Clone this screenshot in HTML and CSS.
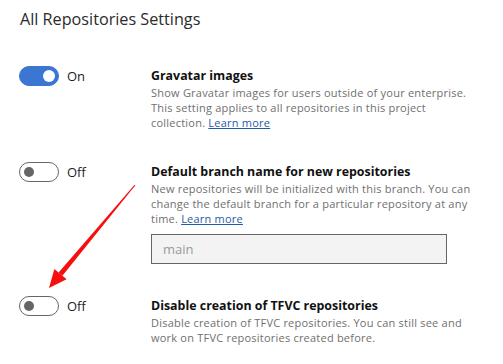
FILE: index.html
```html
<!DOCTYPE html>
<html lang="en">

<head>
  <meta charset="UTF-8">
  <meta name="viewport" content="width=device-width, initial-scale=1.0">
  <title>All Repositories Settings</title>
  <link rel="stylesheet" href="styles.css">
</head>

<body>
  <div class="page">
    <h1 class="page-title">All Repositories Settings</h1>

    <div class="settings">
      <div class="setting">
        <div class="toggle-wrap">
          <span class="toggle toggle--on"><span class="knob"></span></span>
          <span class="toggle-label">On</span>
        </div>
        <div class="setting-body">
          <h3 class="setting-title">Gravatar images</h3>
          <p class="setting-desc">Show Gravatar images for users outside of your enterprise. This setting applies to all repositories in this project collection. <a href="#">Learn more</a></p>
        </div>
      </div>

      <div class="setting">
        <div class="toggle-wrap">
          <span class="toggle"><span class="knob"></span></span>
          <span class="toggle-label">Off</span>
        </div>
        <div class="setting-body">
          <h3 class="setting-title">Default branch name for new repositories</h3>
          <p class="setting-desc">New repositories will be initialized with this branch. You can change the default branch for a particular repository at any time. <a href="#">Learn more</a></p>
          <input class="branch-input" type="text" placeholder="main" disabled>
        </div>
      </div>

      <div class="setting">
        <div class="toggle-wrap">
          <span class="toggle"><span class="knob"></span></span>
          <span class="toggle-label">Off</span>
        </div>
        <div class="setting-body">
          <h3 class="setting-title">Disable creation of TFVC repositories</h3>
          <p class="setting-desc">Disable creation of TFVC repositories. You can still see and work on TFVC repositories created before.</p>
        </div>
      </div>
    </div>
  </div>

  <svg class="annotation" width="503" height="364" viewBox="0 0 503 364">
    <polygon fill="#f50f0f" points="135.4,185.3 134.6,184.7 58.6,272.6 62.4,275.8" />
    <polygon fill="#f50f0f" points="49,288 54.4,269.1 66.6,279.3" />
  </svg>
</body>

</html>
```

FILE: styles.css
```css
body {
  margin: 0;
  background-color: #fff;
  font-family: 'Open Sans', sans-serif;
  color: #222;
}

.page {
  position: relative;
  padding: 7px 20px 0 19px;
}

.page-title {
  margin: 0 0 0 1px;
  font-size: 16.2px;
  line-height: 24px;
  font-weight: 400;
  color: #2b2b2b;
}

.settings {
  display: flex;
  flex-direction: column;
  gap: 33px;
  margin-top: 36px;
}

.setting {
  display: grid;
  grid-template-columns: 132px 320px;
}

.toggle-wrap {
  display: flex;
  align-items: center;
  gap: 8px;
  height: 20px;
  margin-top: -1px;
}

.toggle {
  box-sizing: border-box;
  display: flex;
  align-items: center;
  width: 40px;
  height: 20px;
  padding: 0 4px;
  border: 1px solid #666;
  border-radius: 10px;
  background-color: #fff;
}

.toggle .knob {
  width: 10px;
  height: 10px;
  border-radius: 50%;
  background-color: #666;
}

.toggle--on {
  justify-content: flex-end;
  padding: 0 3px;
  border-color: #3a76d2;
  background-color: #3a76d2;
}

.toggle--on .knob {
  width: 12px;
  height: 12px;
  background-color: #fff;
}

.toggle-label {
  font-size: 13px;
  color: #222;
}

.setting-title {
  margin: 0;
  font-size: 12.4px;
  line-height: 18px;
  font-weight: 700;
  color: #111;
}

.setting-desc {
  margin: 0;
  font-size: 11px;
  line-height: 15px;
  letter-spacing: 0.22px;
  color: #6f6f6f;
}

.setting-desc a {
  color: #1f5aa6;
}

.branch-input {
  box-sizing: border-box;
  display: block;
  width: 296px;
  height: 30px;
  margin-top: 8px;
  padding: 0 11px;
  border: 1px solid #666;
  background-color: #f3f3f3;
  font-family: 'Open Sans', sans-serif;
  font-size: 13px;
}

.branch-input::placeholder {
  color: #9a9a9a;
}

.annotation {
  position: absolute;
  top: 0;
  left: 0;
  pointer-events: none;
}
```
